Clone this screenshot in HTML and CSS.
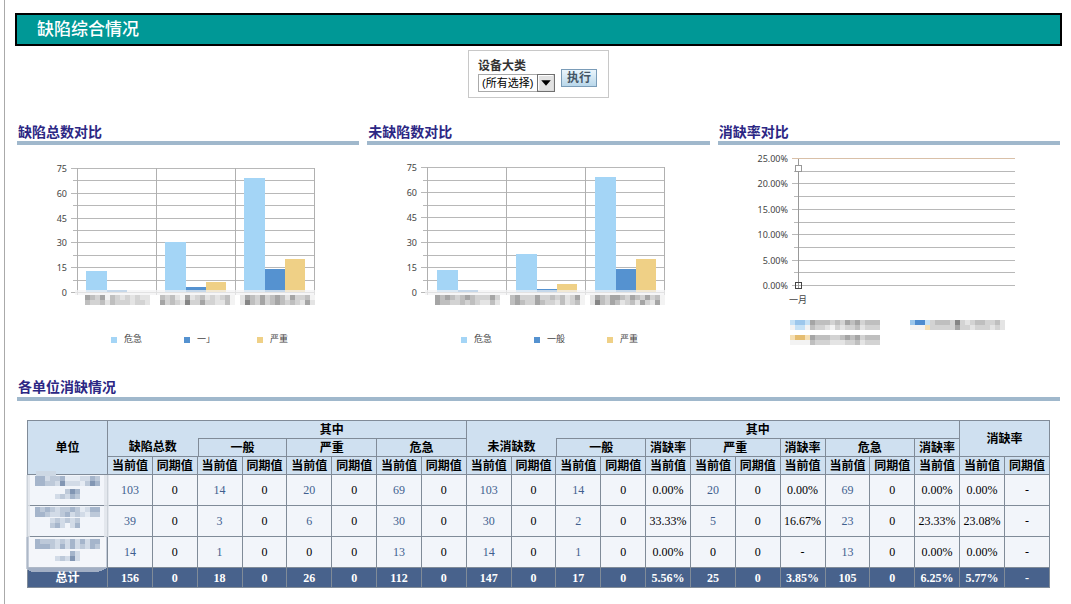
FILE: index.html
```html
<!DOCTYPE html>
<html lang="zh-CN">
<head>
<meta charset="utf-8">
<title>缺陷综合情况</title>
<link rel="stylesheet" href="styles.css">
</head>
<body>
<main class="page">
  <h1 class="banner">缺陷综合情况</h1>

  <form class="filter">
    <div class="filter-field">
      <label for="category">设备大类</label>
      <span class="select-wrap">
        <select id="category"><option>(所有选择)</option></select>
        <svg class="select-arrow" viewBox="0 0 17 17" aria-hidden="true"><rect x=".5" y=".5" width="16" height="16" fill="#e2e2e2" stroke="#707070"/><path d="M1.5 15V1.5H15" fill="none" stroke="#fff"/><path d="M4 6h9L8.500 11z" fill="#000"/></svg>
      </span>
    </div>
    <button type="button">执行</button>
  </form>

  <div class="panels">
    <section class="panel">
      <h2>缺陷总数对比</h2>
      <svg class="chart" id="chart-total" viewBox="0 0 342 205"></svg>
    </section>
    <section class="panel">
      <h2>未缺陷数对比</h2>
      <svg class="chart" id="chart-open" viewBox="0 0 342 205"></svg>
    </section>
    <section class="panel">
      <h2>消缺率对比</h2>
      <svg class="chart" id="chart-rate" viewBox="0 0 342 205"></svg>
    </section>
  </div>

  <section class="units">
    <h2 class="units-title">各单位消缺情况</h2>
    <table class="grid">
      <colgroup><col class="unit-col"><col span="21"></colgroup>
      <thead>
        <tr>
          <th rowspan="3">单位</th>
          <th colspan="2" rowspan="2" class="low open">缺陷总数</th>
          <th colspan="6">其中</th>
          <th colspan="2" rowspan="2" class="low open">未消缺数</th>
          <th colspan="9">其中</th>
          <th colspan="2" rowspan="2">消缺率</th>
        </tr>
        <tr>
          <th colspan="2" class="first">一般</th><th colspan="2">严重</th><th colspan="2">危急</th>
          <th colspan="2" class="first">一般</th><th>消缺率</th><th colspan="2">严重</th><th>消缺率</th><th colspan="2">危急</th><th>消缺率</th>
        </tr>
        <tr>
          <th>当前值</th><th>同期值</th><th>当前值</th><th>同期值</th><th>当前值</th><th>同期值</th><th>当前值</th><th>同期值</th>
          <th>当前值</th><th>同期值</th><th>当前值</th><th>同期值</th><th>当前值</th><th>当前值</th><th>同期值</th><th>当前值</th><th>当前值</th><th>同期值</th><th>当前值</th>
          <th>当前值</th><th>同期值</th>
        </tr>
      </thead>
      <tbody>
        <tr>
          <td class="unit"><svg class="unit-name" viewBox="0 0 80 30"></svg></td>
          <td><a href="#">103</a></td><td>0</td><td><a href="#">14</a></td><td>0</td><td><a href="#">20</a></td><td>0</td><td><a href="#">69</a></td><td>0</td>
          <td><a href="#">103</a></td><td>0</td><td><a href="#">14</a></td><td>0</td><td>0.00%</td><td><a href="#">20</a></td><td>0</td><td>0.00%</td><td><a href="#">69</a></td><td>0</td><td>0.00%</td>
          <td>0.00%</td><td>-</td>
        </tr>
        <tr>
          <td class="unit"><svg class="unit-name" viewBox="0 0 80 30"></svg></td>
          <td><a href="#">39</a></td><td>0</td><td><a href="#">3</a></td><td>0</td><td><a href="#">6</a></td><td>0</td><td><a href="#">30</a></td><td>0</td>
          <td><a href="#">30</a></td><td>0</td><td><a href="#">2</a></td><td>0</td><td>33.33%</td><td><a href="#">5</a></td><td>0</td><td>16.67%</td><td><a href="#">23</a></td><td>0</td><td>23.33%</td>
          <td>23.08%</td><td>-</td>
        </tr>
        <tr>
          <td class="unit"><svg class="unit-name" viewBox="0 0 80 30"></svg></td>
          <td><a href="#">14</a></td><td>0</td><td><a href="#">1</a></td><td>0</td><td>0</td><td>0</td><td><a href="#">13</a></td><td>0</td>
          <td><a href="#">14</a></td><td>0</td><td><a href="#">1</a></td><td>0</td><td>0.00%</td><td>0</td><td>0</td><td>-</td><td><a href="#">13</a></td><td>0</td><td>0.00%</td>
          <td>0.00%</td><td>-</td>
        </tr>
      </tbody>
      <tfoot>
        <tr>
          <th scope="row">总计</th>
          <td>156</td><td>0</td><td>18</td><td>0</td><td>26</td><td>0</td><td>112</td><td>0</td>
          <td>147</td><td>0</td><td>17</td><td>0</td><td>5.56%</td><td>25</td><td>0</td><td>3.85%</td><td>105</td><td>0</td><td>6.25%</td>
          <td>5.77%</td><td>-</td>
        </tr>
      </tfoot>
    </table>
  </section>
</main>
<script src="charts.js"></script>
</body>
</html>
```

FILE: styles.css
```css
* { box-sizing: border-box; }

body {
  margin: 0;
  background: #fff;
  font-family: "Liberation Sans", "Noto Sans CJK SC", sans-serif;
  font-size: 12px;
  color: #000;
}

.page {
  margin-left: 4px;
  min-height: 100vh;
  padding: 13px 9px 0 10px;
  border-left: 1px solid #aaa;
}

.banner {
  margin: 0;
  padding: 0 20px;
  border: 2px solid #000;
  background: #009896;
  color: #fff;
  font-size: 17px;
  font-weight: 500;
  line-height: 29px;
}

.filter {
  display: flex;
  align-items: center;
  gap: 6px;
  width: fit-content;
  height: 48px;
  margin: 4px auto 0;
  padding: 0 11px 0 9px;
  border: 1px solid #c8c8c8;
}

.filter-field {
  display: flex;
  flex-direction: column;
  padding-top: 2px;
}

.filter label {
  color: #333;
  font-weight: bold;
  line-height: 16px;
}

.select-wrap {
  display: flex;
  position: relative;
}

.filter select {
  appearance: none;
  width: 77px;
  height: 18px;
  margin: 0;
  padding: 0 17px 0 3px;
  border: 1px solid #aaa;
  border-radius: 0;
  background: #fff;
  color: #000;
  font: 11px/16px "Liberation Sans", "Noto Sans CJK SC", sans-serif;
}

.select-arrow {
  position: absolute;
  top: 0;
  right: 0;
  width: 18px;
  height: 18px;
  pointer-events: none;
}

.filter button {
  width: 36px;
  height: 18px;
  margin-top: 8px;
  padding: 0;
  border: 1px solid #7a9cb8;
  border-radius: 0;
  background: linear-gradient(#eaf5fc, #b9d7ea);
  color: #456;
  font: bold 12px/16px "Liberation Sans", "Noto Sans CJK SC", sans-serif;
}

.panels {
  display: grid;
  grid-template-columns: repeat(3, 1fr);
  gap: 8px;
  margin: 25px 2px 0;
}

h2 {
  margin: 0;
  padding-left: 1px;
  border-bottom: 4px solid #a0b8cc;
  color: #2c2784;
  font-size: 14px;
  line-height: 18px;
}

.chart {
  display: block;
  width: 342px;
  max-width: 100%;
  height: 205px;
  margin-top: 5px;
  overflow: visible;
  shape-rendering: crispEdges;
}

.chart text {
  fill: #444;
  font-family: "Noto Sans", "Noto Sans CJK SC", sans-serif;
  font-size: 9px;
}

.chart .axis-label { text-anchor: end; }
.chart .month { text-anchor: middle; }

.units { margin-top: 22px; }

.units-title {
  margin: 0 2px;
  line-height: 20px;
}

.grid {
  width: calc(100% - 24px);
  margin: 19px 12px 0;
  border-collapse: separate;
  border-spacing: 0;
  border-top: 1px solid #808b98;
  border-left: 1px solid #808b98;
  table-layout: fixed;
  text-align: center;
}

.unit-col { width: 80px; }

.grid th,
.grid td {
  height: 18px;
  padding: 0;
  border-right: 1px solid #808b98;
  border-bottom: 1px solid #808b98;
  line-height: 16px;
  white-space: nowrap;
}

.grid thead th { background: #cfe0f0; }
.grid thead .open { border-right: 0; }
.grid thead .first { border-left: 1px solid #808b98; }

.grid thead .low {
  padding-bottom: 1px;
  vertical-align: bottom;
}

.grid td { font-family: "Liberation Serif", "Noto Sans CJK SC", serif; }

.grid tbody td {
  height: 31px;
  background: #f2f5fa;
}

.grid a {
  color: #3f5f8f;
  text-decoration: none;
}

.unit-name {
  display: block;
  width: 80px;
  height: 30px;
  overflow: visible;
  shape-rendering: crispEdges;
}

.grid tfoot th,
.grid tfoot td {
  height: 20px;
  background: #48628c;
  color: #fff;
  font-weight: bold;
}
```

FILE: charts.js
```js
const shades = {
  a: '#f3f3f3', b: '#e4e4e4', c: '#d3d3d3', d: '#bfbfbf', e: '#a5a5a5', f: '#858585',
  k: '#c5e1f6', l: '#9cc7ec', m: '#4e8ccf', n: '#f5dfb4', o: '#e5bd71',
  1: '#e5ebf3', 2: '#d2dbe7', 3: '#bdc9d9', 4: '#a5b5cb', 5: '#8296b3'
};

const rect = (x, y, w, h, fill, opacity = 1) =>
  `<rect x="${x}" y="${y}" width="${w}" height="${h}" fill="${fill}" opacity="${opacity}"/>`;

const label = (x, y, text, cls = '') => `<text x="${x}" y="${y}" class="${cls}">${text}</text>`;

// Draws rows of 5px tiles; a dot leaves a gap.
function tiles(x, y, rows) {
  return rows.map((row, r) => [...row].map((c, i) =>
    c === '.' ? '' : rect(x + i * 5, y + r * 5, 5, 5, shades[c])).join('')).join('');
}

function barChart(id, { top, left, groups, legend, names }) {
  let out = '';
  const base = 142;
  for (let i = 0; i <= 10; i++) {
    const y = Math.round(top + (base - top) * i / 10);
    out += rect(i % 2 ? 56 : 54, y, i % 2 ? 242 : 244, 1, '#b8b8b8');
    if (i % 2 === 0) out += label(50, y + 4, 75 - i * 7.5, 'axis-label');
  }
  for (let i = 0; i < 4; i++) out += rect(60 + i * 79, top, 1, base - top + 3, '#b0b0b0');
  const colors = ['#a4d5f6', '#5592d0', '#efd086'];
  groups.forEach((group, g) => group.forEach((value, i) => {
    const h = Math.round(value * (base - top) / 75);
    out += rect(left + g * 79 + [0, 21, 41][i], base - h, i ? 20 : 21, h, colors[i]);
  }));
  out += rect(58, 140, 240, 5, '#f2f3f4', 0.72);
  names.forEach(([x, rows]) => { out += tiles(x, 145, rows); });
  legend.forEach((text, i) => {
    out += rect(94 + i * 73, 187, 6, 6, colors[i]) + label(107 + i * 73, 192, text);
  });
  document.getElementById(id).innerHTML = out;
}

barChart('chart-total', {
  top: 18, left: 69,
  groups: [[13, 1, 0], [30, 3, 6], [69, 14, 20]],
  legend: ['危急', '一」', '严重'],
  names: [[68, ['edceadcbcbcbb', 'dccdbdcccbccb']], [143, ['dcdbaebcdbcbcda', 'ecdcbfcceccbbda']], [223, ['bedcecdedbeccda', 'bfdcecdedcdcbeb']]]
});
barChart('chart-open', {
  top: 17, left: 70,
  groups: [[13, 1, 0], [23, 2, 5], [69, 14, 20]],
  legend: ['危急', '一般', '严重'],
  names: [[68, ['ededcdedcccec', 'eddccdcdcbbdb']], [143, ['deccceccdcdbcea', 'dedccedccbdbcda']], [223, ['bedceedcedcecda', 'bfdcedbcdbecbea']]]
});

let rate = '';
for (let i = 0; i <= 10; i++) {
  const y = Math.round(8 + i * 12.7);
  rate += rect(i % 2 ? 76 : 74, y, i % 2 ? 221 : 223, 1, i ? '#b8b8b8' : '#d9c0a8');
  if (i % 2 === 0) rate += label(70, y + 4, (25 - i * 2.5).toFixed(2) + '%', 'axis-label');
}
rate += rect(80, 9, 1, 129, '#999');
rate += '<rect x="77.500" y="15.500" width="6" height="6" fill="#fff" stroke="#999"/>';
rate += '<rect x="77.500" y="132.500" width="6" height="6" fill="none" stroke="#444"/>';
rate += label(80, 153, '一月', 'month');
rate += tiles(72, 170, ['kllkedddcdcedecddd', 'akkadccbacbccdbccc']);
rate += tiles(72, 185, ['noonedddccdedecddd', 'aaaadcccbbbccdbccc']);
rate += tiles(192, 170, ['lmmkcdddcfcbcddccdb', 'aaanccccceccbcccbcb']);
document.getElementById('chart-rate').innerHTML = rate;

const names = [
  [[7, 1, ['4423341112243', '4433252221354']], [27, 14, ['..354.', '23243.']]],
  [[7, 1, ['4343233431244', '4432234232133']], [22, 12, ['232323', '342.24']]],
  [[7, 2, ['4333232424244', '4443242423243']], [27, 14, ['...42.', '23252.']]]
];
document.querySelectorAll('.unit-name').forEach((svg, i) => {
  const haze = i === 2
    ? '<path d="M-2 0V31Q0 35 8 35H65Q76 35 79 30V0" fill="#b9c3d2" opacity=".8"/>' + rect(1, 0, 77, 30, '#f4f6fa')
    : rect(-2, 0, 4, 31, '#dfe3ea', 0.8) + rect(76, 0, 5, 31, '#dfe3ea', 0.8);
  const tab = i === 0 ? rect(8, -4, 20, 5, '#cdd8e4') : '';
  svg.innerHTML = haze + tab + names[i].map(n => tiles(...n)).join('');
});
```
